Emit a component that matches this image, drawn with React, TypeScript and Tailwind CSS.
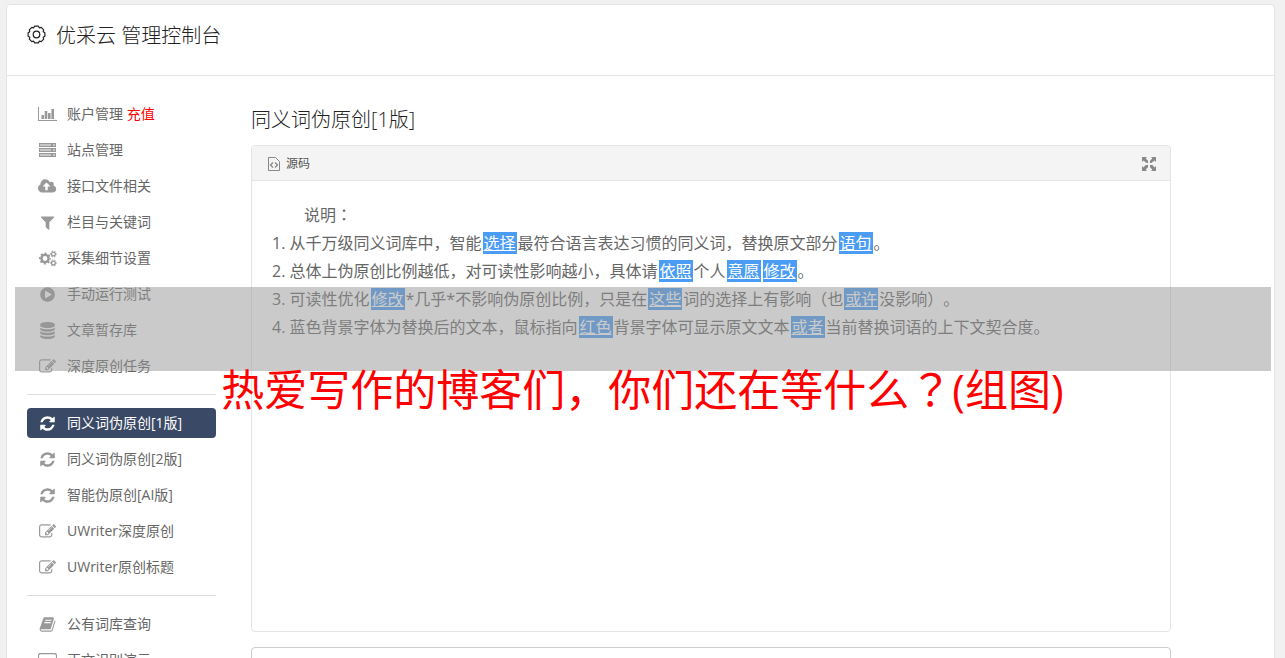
import React from "react";

type IconProps = { className?: string };

const glyph = (d: string, viewBox = "0 0 1792 1792") =>
  ({ className }: IconProps) => (
    <svg viewBox={viewBox} className={className} fill="currentColor" aria-hidden="true">
      <path d={d} />
    </svg>
  );

const RefreshIcon = glyph(
  "M1639 1056q0 5-1 7-64 268-268 434.5t-478 166.5q-146 0-282.5-55t-243.5-157l-129 129q-19 19-45 19t-45-19-19-45v-448q0-26 19-45t45-19h448q26 0 45 19t19 45-19 45l-137 137q71 66 161 102t187 36q134 0 250-65t186-179q11-17 53-117 8-23 30-23h192q13 0 22.5 9.5t9.5 22.5zm25-800v448q0 26-19 45t-45 19h-448q-26 0-45-19t-19-45 19-45l138-138q-148-137-349-137-134 0-250 65t-186 179q-11 17-53 117-8 23-30 23h-199q-13 0-22.5-9.5t-9.5-22.5v-7q65-268 270-434.5t480-166.5q146 0 284 55.5t245 156.5l130-129q19-19 45-19t45 19 19 45z"
);

const EditIcon = glyph(
  "M888 1184l116-116-152-152-116 116v56h96v96h56zm440-720q-16-16-33 1l-350 350q-17 17-1 33t33-1l350-350q17-17 1-33zm80 594v190q0 119-84.5 203.5t-203.5 84.5h-832q-119 0-203.5-84.5t-84.5-203.5v-832q0-119 84.5-203.5t203.5-84.5h832q63 0 117 25 15 7 18 23 3 17-9 29l-49 49q-14 14-32 8-23-6-45-6h-832q-66 0-113 47t-47 113v832q0 66 47 113t113 47h832q66 0 113-47t47-113v-126q0-13 9-22l64-64q15-15 35-7t20 29zm-96-738l288 288-672 672h-288v-288zm444 132l-92 92-288-288 92-92q28-28 68-28t68 28l152 152q28 28 28 68t-28 68z"
);

const UploadIcon = glyph(
  "M1216 864q0-14-9-23l-352-352q-9-9-23-9t-23 9l-351 351q-10 12-10 24 0 14 9 23t23 9h224v352q0 13 9.5 22.5t22.5 9.5h192q13 0 22.5-9.5t9.5-22.5v-352h224q13 0 22.5-9.5t9.5-22.5zm640 288q0 159-112.5 271.5t-271.5 112.5h-1088q-185 0-316.5-131.5t-131.5-316.5q0-130 70-240t188-165q-2-30-2-43 0-212 150-362t362-150q156 0 285.5 87t188.5 231q71-62 166-62 106 0 181 75t75 181q0 76-41 138 130 31 213.5 135.5t83.5 238.5z",
  "-64 0 1920 1792"
);

const FilterIcon = glyph(
  "M1595 295q17 41-14 70l-493 493v742q0 42-39 59-13 5-25 5-27 0-45-19l-256-256q-19-19-19-45v-486l-493-493q-31-29-14-70 17-39 59-39h1280q42 0 59 39z"
);

const PlayIcon = glyph(
  "M896 128q209 0 385.5 103t279.5 279.5 103 385.5-103 385.5-279.5 279.5-385.5 103-385.5-103-279.5-279.5-103-385.5 103-385.5 279.5-279.5 385.5-103zm384 823q32-18 32-55t-32-55l-544-320q-31-19-64-1-32 19-32 56v640q0 37 32 56 16 8 32 8 17 0 32-9z"
);

const DatabaseIcon = glyph(
  "M896 768q237 0 443-43t325-127v170q0 69-103 128t-280 93.5-385 34.5-385-34.5-280-93.5-103-128v-170q119 84 325 127t443 43zm0 768q237 0 443-43t325-127v170q0 69-103 128t-280 93.5-385 34.5-385-34.5-280-93.5-103-128v-170q119 84 325 127t443 43zm0-384q237 0 443-43t325-127v170q0 69-103 128t-280 93.5-385 34.5-385-34.5-280-93.5-103-128v-170q119 84 325 127t443 43zm0-1152q208 0 385 34.5t280 93.5 103 128v128q0 69-103 128t-280 93.5-385 34.5-385-34.5-280-93.5-103-128v-128q0-69 103-128t280-93.5 385-34.5z"
);

const BookIcon = glyph(
  "M1703 478q40 57 18 129l-275 906q-19 64-76.5 107.5t-122.5 43.5h-923q-77 0-148.5-53.5t-99.5-131.5q-24-67-2-127 0-4 3-27t4-37q1-8-3-21.5t-3-19.5q2-11 8-21t16.5-23.5 16.5-23.5q23-38 45-91.5t30-91.5q3-10 .5-30t-.5-28q3-11 17-28t17-23q21-36 42-92t25-90q1-9-2.5-32t.5-28q4-13 22-30.5t22-22.5q19-26 42.5-84.5t27.5-96.5q1-8-3-25.5t-2-26.5q2-8 9-18t18-23 17-21q8-12 16.5-30.5t15-35 16-36 19.5-32 26.5-23.5 36-11.5 47.5 5.5l-1 3q38-9 51-9h761q74 0 114 56t18 130l-274 906q-36 119-71.5 153.5t-128.5 34.5h-869q-27 0-38 15-11 16-1 43 24 70 144 70h923q29 0 56-15.5t35-41.5l300-987q7-22 5-57 38 15 59 43zm-1064 2q-4 13 2 22.5t20 9.5h608q13 0 25.5-9.5t16.5-22.5l21-64q4-13-2-22.5t-20-9.5h-608q-13 0-25.5 9.5t-16.5 22.5zm-83 256q-4 13 2 22.5t20 9.5h608q13 0 25.5-9.5t16.5-22.5l21-64q4-13-2-22.5t-20-9.5h-608q-13 0-25.5 9.5t-16.5 22.5z"
);

const ChartIcon = glyph(
  "M0 1h1v13h18v1H0zM3.5 9H6v4H3.5zM6.7 5h2.6v8H6.7zM10 7h2.6v6H10zM13.4 3H16v10h-2.6z",
  "0 0 19 17"
);

const ScreenIcon = glyph(
  "M2 1h14a2 2 0 0 1 2 2v9a2 2 0 0 1-2 2H2a2 2 0 0 1-2-2V3a2 2 0 0 1 2-2zM1 3v8h16V3l-1-1H2zM6 15h6v1H6z",
  "0 0 18 16"
);

const ExpandIcon = glyph(
  "M0 0h5L3.7 1.4 6 3.7V6H4.7L1.4 3.4 0 5zM14 0v5l-1.4-1.6L9.3 6H8V3.7l2.3-2.3L9 0zM0 14V9l1.4 1.4L3.7 8H6v2.3l-2.3 2.3L5 14zM14 14H9l1.3-1.4L8 10.3V8h2.3l2.3 2.4L14 9z",
  "0 0 14 14"
);

const ServerIcon = ({ className }: IconProps) => (
  <svg viewBox="0 0 17 17" className={className} fill="currentColor" aria-hidden="true">
    {[1, 6, 11].map((y) => (
      <g key={y}>
        <rect x="0" y={y} width="17" height="4" opacity=".55" />
        <path d={`M0 ${y}h17v1H0zM0 ${y + 3}h17v1H0zM0 ${y + 1}h1v2H0zM12 ${y + 1}h2v2h-2zM16 ${y + 1}h1v2h-1z`} />
      </g>
    ))}
  </svg>
);

const CogsIcon = ({ className }: IconProps) => (
  <svg viewBox="0 0 18 17" className={className} fill="none" stroke="currentColor" aria-hidden="true">
    <circle cx="6" cy="8.5" r="3.6" strokeWidth="2.4" />
    <circle cx="6" cy="8.5" r="5.2" strokeWidth="1.6" strokeDasharray="2.1 1.98" strokeDashoffset="1.05" />
    <circle cx="14.4" cy="4" r="1.9" strokeWidth="1.3" />
    <circle cx="14.4" cy="4" r="3" strokeWidth="1" strokeDasharray="1.57 1.57" strokeDashoffset=".8" />
    <circle cx="14.4" cy="13" r="1.9" strokeWidth="1.3" />
    <circle cx="14.4" cy="13" r="3" strokeWidth="1" strokeDasharray="1.57 1.57" strokeDashoffset=".8" />
  </svg>
);

const GearIcon = ({ className }: IconProps) => (
  <svg viewBox="-9.5 -9.5 19 19" className={className} fill="none" stroke="currentColor" strokeWidth="1.2">
    <path d="M6.7-2.8L8.4-1.8V1.8L6.7 2.8L7.2 4.7L4.7 7.2L2.8 6.7L1.8 8.4H-1.8L-2.8 6.7L-4.7 7.2L-7.2 4.7L-6.7 2.8L-8.4 1.8V-1.8L-6.7-2.8L-7.2-4.7L-4.7-7.2L-2.8-6.7L-1.8-8.4H1.8L2.8-6.7L4.7-7.2L7.2-4.7Z" strokeLinejoin="round" />
    <circle r="3.3" />
  </svg>
);

const SourceIcon = ({ className }: IconProps) => (
  <svg viewBox="0 0 12 14" className={className} fill="none" stroke="currentColor">
    <path d="M.5.5h7l4 4v9H.5z" />
    <path d="M5 5.5 2.5 8 5 10.5M7 5.5 9.5 8 7 10.5" strokeWidth="1.3" />
  </svg>
);

type MenuItem = {
  label: string;
  icon: (props: IconProps) => React.ReactNode;
  extra?: string;
  active?: boolean;
};

const menu: MenuItem[][] = [
  [
    { label: "账户管理", icon: ChartIcon, extra: "充值" },
    { label: "站点管理", icon: ServerIcon },
    { label: "接口文件相关", icon: UploadIcon },
    { label: "栏目与关键词", icon: FilterIcon },
    { label: "采集细节设置", icon: CogsIcon },
    { label: "手动运行测试", icon: PlayIcon },
    { label: "文章暂存库", icon: DatabaseIcon },
    { label: "深度原创任务", icon: EditIcon },
  ],
  [
    { label: "同义词伪原创[1版]", icon: RefreshIcon, active: true },
    { label: "同义词伪原创[2版]", icon: RefreshIcon },
    { label: "智能伪原创[AI版]", icon: RefreshIcon },
    { label: "UWriter深度原创", icon: EditIcon },
    { label: "UWriter原创标题", icon: EditIcon },
  ],
  [
    { label: "公有词库查询", icon: BookIcon },
    { label: "正文识别演示", icon: ScreenIcon },
  ],
];

// words in braces are the replaced ones
const notes = [
  "从千万级同义词库中，智能{选择}最符合语言表达习惯的同义词，替换原文部分{语句}。",
  "总体上伪原创比例越低，对可读性影响越小，具体请{依照}个人{意愿}{修改}。",
  "可读性优化{修改}*几乎*不影响伪原创比例，只是在{这些}词的选择上有影响（也{或许}没影响）。",
  "蓝色背景字体为替换后的文本，鼠标指向{红色}背景字体可显示原文文本{或者}当前替换词语的上下文契合度。",
];

// the TC face centres these marks in their cell
const Centered = ({ children }: { children: string }) => (
  <span lang="zh-TW" className="leading-none font-['Noto_Sans_CJK_TC',sans-serif]">
    {children}
  </span>
);

const Note = ({ text }: { text: string }) => (
  <>
    {text.split(/(\{.*?\})/).map((part, i) =>
      part.startsWith("{") ? (
        <span key={i} className="mx-px px-px bg-[#4a9cf5] text-white underline">
          {part.slice(1, -1)}
        </span>
      ) : (
        part
      )
    )}
  </>
);

const MenuLink = ({ item }: { item: MenuItem }) => {
  const Icon = item.icon;
  return (
    <a
      href="#"
      className={`flex items-center h-[30px] pl-[11px] gap-2.5 rounded text-sm ${
        item.active ? "bg-[#3a4a66] text-white" : "text-[#666]"
      }`}
    >
      <span className={`flex justify-center w-[19px] ${item.active ? "text-white" : "text-[#999]"}`}>
        <Icon className="h-[17px] w-auto" />
      </span>
      <span>
        {item.label}
        {item.extra && <span className="text-[#f00]"> {item.extra}</span>}
      </span>
    </a>
  );
};

export default function App() {
  return (
    <div
      lang="zh-CN"
      className="relative h-screen overflow-hidden bg-[#f1f1f1] pt-1 pl-1.5 pr-2.5 [text-spacing-trim:space-all] font-['Open_Sans','Noto_Sans_CJK_SC',sans-serif]"
    >
      <div className="min-h-full rounded-t border border-[#e4e4e4] bg-white">
        <header className="flex items-center gap-2.5 h-[71px] pl-5 pb-2 border-b border-[#e4e4e4] text-[#222]">
          <GearIcon className="size-[19px] mb-1" />
          <h1 className="text-xl font-light">优采云 管理控制台</h1>
        </header>
        <div className="flex gap-[35px] pl-5">
          <nav className="w-[189px] shrink-0 pt-[23px]">
            {menu.map((group, i) => (
              <div
                key={i}
                className={`flex flex-col gap-1.5 ${i > 0 ? "mt-[13px] pt-[13px] border-t border-[#ddd]" : ""}`}
              >
                {group.map((item) => (
                  <MenuLink key={item.label} item={item} />
                ))}
              </div>
            ))}
          </nav>
          <main className="flex-1 pt-[30px] mr-[103px]">
            <h2 className="text-xl leading-7 font-light text-[#222]">同义词伪原创[1版]</h2>
            <section className="mt-[11px] h-[487px] rounded border border-[#e4e4e4]">
              <div className="flex items-center justify-between h-[35px] px-3.5 pt-0.5 rounded-t bg-[#f4f4f4] border-b border-[#e4e4e4]">
                <button className="flex items-center gap-1.5 pl-0.5 text-xs text-[#555]">
                  <SourceIcon className="w-3 h-3.5 text-[#888]" />
                  源码
                </button>
                <button aria-label="全屏">
                  <ExpandIcon className="size-3.5 text-[#888]" />
                </button>
              </div>
              <div className="px-5 pt-5 text-base leading-7 text-[#666]">
                <p className="pl-8">
                  说明<Centered>：</Centered>
                </p>
                <ol>
                  {notes.map((note, i) => (
                    <li key={i}>
                      {i + 1}. <Note text={note} />
                    </li>
                  ))}
                </ol>
              </div>
            </section>
            <div className="mt-[15px] h-20 rounded border border-[#ccc]" />
          </main>
        </div>
      </div>
      <div className="absolute left-[15px] right-3.5 top-[287px] h-[84px] bg-[#969696]/50" />
      <p className="absolute inset-x-0 top-[360px] text-center text-[43px] leading-[60px] text-[#f00]">
        热爱写作的博客们，你们还在等什么<Centered>？</Centered>(组图)
      </p>
    </div>
  );
}
